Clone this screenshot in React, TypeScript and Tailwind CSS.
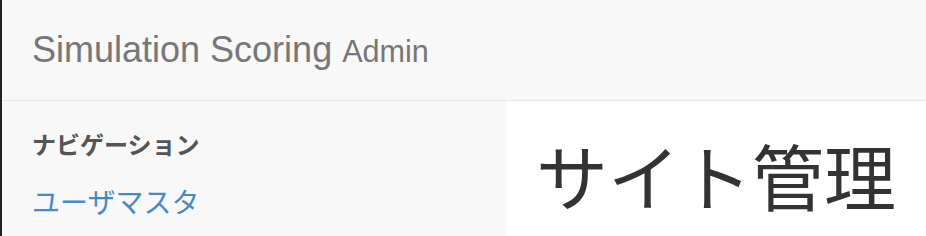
export default function App() {
  const latin = { fontFamily: '"Liberation Sans", Arial, sans-serif' };
  const jp = { fontFamily: '"Liberation Sans", "Noto Sans CJK JP", sans-serif' };
  return (
    <div className="w-[926px] h-[236px] overflow-hidden border-l-2 border-[#222] bg-white flex flex-col">
      <div className="h-[101px] shrink-0 bg-[#f8f8f8] border-b border-[#e7e7e7] px-[30px] pt-[30px]">
        <div className="text-[36px] leading-[40px] text-[#777] whitespace-nowrap" style={latin}>
          Simulation Scoring <small className="text-[30.6px]">Admin</small>
        </div>
      </div>
      <div className="flex flex-1">
        <div className="w-[504px] shrink-0 bg-[#f8f8f8] px-[30px] pt-[33px]" style={jp}>
          <div className="text-[24px] leading-[24px] font-bold text-[#555] whitespace-nowrap">ナビゲーション</div>
          <div className="mt-[32px] text-[28px] leading-[28px] text-[#428bca] whitespace-nowrap">ユーザマスタ</div>
        </div>
        <div className="flex-1 bg-white pl-[30px] pt-[43px]" style={jp}>
          <div className="text-[72px] leading-[72px] text-[#333] whitespace-nowrap">サイト管理</div>
        </div>
      </div>
    </div>
  );
}
